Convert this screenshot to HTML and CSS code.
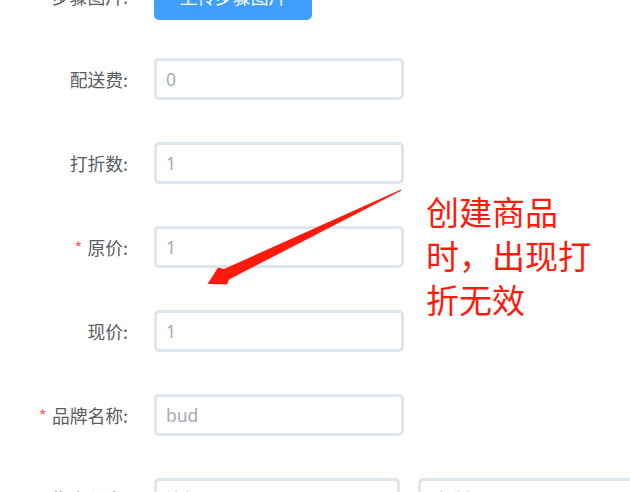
FILE: index.html
```html
<!DOCTYPE html>
<html lang="zh-CN">
<head>
  <meta charset="utf-8">
  <title>商品表单</title>
  <link rel="stylesheet" href="styles.css">
</head>
<body>
  <form class="goods-form">
    <div class="form-row row-upload">
      <label class="form-label">步骤图片:</label>
      <button type="button" class="upload-btn">上传步骤图片</button>
    </div>
    <div class="form-row">
      <label class="form-label">配送费:</label>
      <div class="form-input">0</div>
    </div>
    <div class="form-row">
      <label class="form-label">打折数:</label>
      <div class="form-input">1</div>
    </div>
    <div class="form-row">
      <label class="form-label"><span class="req">*</span>原价:</label>
      <div class="form-input">1</div>
    </div>
    <div class="form-row">
      <label class="form-label">现价:</label>
      <div class="form-input">1</div>
    </div>
    <div class="form-row">
      <label class="form-label"><span class="req">*</span>品牌名称:</label>
      <div class="form-input">bud</div>
    </div>
    <div class="form-row">
      <label class="form-label"><span class="req">*</span>指定分类:</label>
      <div class="form-input select-a">比如</div>
      <div class="form-input select-b">请选择</div>
    </div>
  </form>

  <!-- screenshot annotation -->
  <svg class="note-arrow" width="630" height="492" viewBox="0 0 630 492">
    <polygon fill="#ff1a0d" points="401,189.5 224,269 218,267.5 207.5,284 227,284.5 229,279.5 401,190.8"/>
  </svg>
  <div class="note-text">创建商品<br>时，出现打<br>折无效</div>
</body>
</html>
```
FILE: styles.css
```css
html, body {
  margin: 0;
  height: 100%;
  overflow: hidden;
  background: #fff;
}

body {
  font-family: "Noto Sans CJK SC", "Noto Sans", sans-serif;
  font-size: 17px;
  color: #5a5d64;
  position: relative;
}

.goods-form {
  margin-top: -28px;
}

.form-row {
  display: flex;
  align-items: center;
  height: 42px;
  margin-bottom: 42px;
}

.row-upload {
  height: 48px;
  margin-bottom: 38px;
}

.form-label {
  width: 128px;
  padding-right: 26px;
  text-align: right;
  white-space: nowrap;
  flex-shrink: 0;
  font-size: 17.8px;
}

.req {
  color: #f56c6c;
  margin-right: 5px;
}

.upload-btn {
  width: 158px;
  height: 48px;
  border: none;
  border-radius: 5px;
  background: #409eff;
  color: #fff;
  font-family: inherit;
  font-size: 17.8px;
}

.form-input {
  box-sizing: border-box;
  width: 250px;
  height: 42px;
  border: 3px solid #dfe5ec;
  border-radius: 5px;
  padding: 0 9px;
  line-height: 36px;
  color: #a3acb7;
  font-family: "Noto Sans", sans-serif;
  font-size: 17.5px;
  flex-shrink: 0;
}

.select-a {
  width: 246px;
}

.select-b {
  margin-left: 18px;
  width: 240px;
}

.note-arrow {
  position: absolute;
  left: 0;
  top: 0;
}

.note-text {
  position: absolute;
  left: 426px;
  top: 189px;
  font-size: 33px;
  line-height: 44px;
  color: #ff1a0d;
}
```
